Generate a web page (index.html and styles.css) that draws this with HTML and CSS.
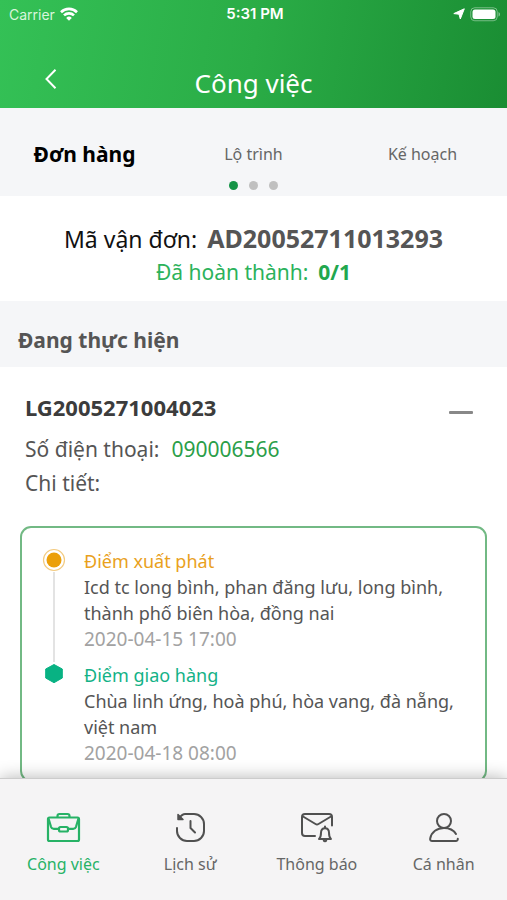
FILE: index.html
```html
<!DOCTYPE html>
<html lang="vi">
<head>
<meta charset="utf-8">
<meta name="viewport" content="width=device-width, initial-scale=1">
<title>Công việc</title>
<link rel="stylesheet" href="styles.css">
</head>
<body>
<header class="header">
  <div class="status">
    <div class="status-left">
      <span>Carrier</span>
      <svg width="18" height="14" viewBox="0 0 18 14" fill="none" stroke="currentColor" stroke-width="2.6" aria-hidden="true">
        <path d="M1 5.200a11.400 11.400 0 0 1 16 0M4 8.400a7.100 7.100 0 0 1 10 0"/>
        <path d="M9 13.800 6.200 10.900a4 4 0 0 1 5.600 0z" fill="currentColor" stroke="none"/>
      </svg>
    </div>
    <time class="clock">5:31 PM</time>
    <div class="status-right">
      <svg width="12" height="12" viewBox="0 0 12 12" fill="currentColor" stroke="currentColor" stroke-width="1" stroke-linejoin="round" aria-hidden="true"><path d="M11.300.8 7.300 11 6 6.200.8 5.600z"/></svg>
      <svg width="31" height="15" viewBox="0 0 31 15" aria-hidden="true">
        <rect x="0.75" y="0.75" width="26.5" height="13" rx="4" fill="none" stroke="#fff" stroke-opacity=".4"/>
        <rect x="2.5" y="2.5" width="23" height="9.5" rx="2.5" fill="#fff"/>
        <path d="M28.500 5v4.600c2-.8 2-3.800 0-4.600" fill="#fff" fill-opacity=".45"/>
      </svg>
    </div>
  </div>
  <div class="title-bar">
    <button class="back" type="button" aria-label="Quay lại">
      <svg width="14" height="22" viewBox="0 0 14 22" fill="none" stroke="currentColor" stroke-width="2"><path d="M11.500 1.800 2.500 11l9 9.200"/></svg>
    </button>
    <h1>Công việc</h1>
  </div>
</header>

<main>
  <nav class="tabs">
    <div class="tab-row">
      <a class="tab active" href="#don-hang">Đơn hàng</a>
      <a class="tab" href="#lo-trinh">Lộ trình</a>
      <a class="tab" href="#ke-hoach">Kế hoạch</a>
    </div>
    <div class="dots"><i class="dot on"></i><i class="dot"></i><i class="dot"></i></div>
  </nav>

  <section class="summary">
    <p class="code"><span>Mã vận đơn:</span><strong>AD20052711013293</strong></p>
    <p class="done"><span>Đã hoàn thành:</span><strong>0/1</strong></p>
  </section>

  <h2 class="group-title">Đang thực hiện</h2>

  <section class="order">
    <div class="order-head">
      <h3>LG2005271004023</h3>
      <button class="collapse" type="button" aria-label="Thu gọn"><i></i></button>
    </div>
    <p class="row"><span>Số điện thoại:</span><a href="tel:090006566">090006566</a></p>
    <p class="row">Chi tiết:</p>

    <ol class="route">
      <li class="stop start">
        <div class="rail">
          <svg width="24" height="24" viewBox="0 0 24 24" aria-hidden="true"><circle cx="12" cy="12" r="10.500" fill="none" stroke="#f3cb80" stroke-width="1.200"/><circle cx="12" cy="12" r="7.500" fill="#eb9f09"/></svg>
          <i class="line"></i>
        </div>
        <div>
          <h4>Điểm xuất phát</h4>
          <p>Icd tc long bình, phan đăng lưu, long bình, thành phố biên hòa, đồng nai</p>
          <time>2020-04-15 17:00</time>
        </div>
      </li>
      <li class="stop end">
        <div class="rail">
          <svg width="24" height="24" viewBox="0 0 24 24" aria-hidden="true"><path d="M12 2.500 20.300 7v9L12 20.700 3.700 16V7z" fill="#08b283" stroke="#08b283" stroke-width="1" stroke-linejoin="round"/></svg>
        </div>
        <div>
          <h4>Điểm giao hàng</h4>
          <p>Chùa linh ứng, hoà phú, hòa vang, đà nẵng, việt nam</p>
          <time>2020-04-18 08:00</time>
        </div>
      </li>
    </ol>
  </section>
</main>

<nav class="bottom-nav">
  <a class="active" href="#cong-viec">
    <svg width="36" height="32" viewBox="0 0 36 32" fill="none" stroke="currentColor" stroke-width="2.200" stroke-linejoin="round" aria-hidden="true">
      <rect x="3" y="5.500" width="31" height="23.500" rx="1.500"/>
      <path d="M3.500 6.500 6 14.800a3 3 0 0 0 2.800 2H14M33.500 6.500 31 14.800a3 3 0 0 1-2.800 2H23"/>
      <path d="M12.500 5.500V4a2 2 0 0 1 2-2h8a2 2 0 0 1 2 2v1.500"/>
      <rect x="14" y="15" width="9" height="4.500" rx="1.500"/>
    </svg>
    <span>Công việc</span>
  </a>
  <a href="#lich-su">
    <svg width="36" height="32" viewBox="0 0 36 32" fill="none" stroke="currentColor" stroke-width="2" stroke-linecap="round" stroke-linejoin="round" aria-hidden="true">
      <path d="M5 16v3a10 10 0 0 0 10 10h7a10 10 0 0 0 10-10v-7A10 10 0 0 0 22 2H13Q10.500 2 7 6"/>
      <path d="M6 2.500v5h5z" fill="currentColor" stroke-width="1.500"/>
      <path d="M18.500 9v7l4.500 4.500"/>
    </svg>
    <span>Lịch sử</span>
  </a>
  <a href="#thong-bao">
    <svg width="36" height="32" viewBox="0 0 36 32" fill="none" stroke="currentColor" stroke-width="2" stroke-linecap="round" stroke-linejoin="round" aria-hidden="true">
      <path d="M16 24H6a3 3 0 0 1-3-3V5a3 3 0 0 1 3-3h24a3 3 0 0 1 3 3v8.500"/>
      <path d="M4 4.500 16.500 12a3 3 0 0 0 3 0L32 4.500"/>
      <path d="M20 27c1.700-1.300 2-2.800 2-6.200 0-2.900 1.600-4.600 4-4.600s4 1.700 4 4.600c0 3.400.3 4.900 2 6.200z"/>
      <path d="M26 16v-1.500M24.800 28.500c.5 1 1.900 1 2.400 0"/>
    </svg>
    <span>Thông báo</span>
  </a>
  <a href="#ca-nhan">
    <svg width="36" height="32" viewBox="0 0 36 32" fill="none" stroke="currentColor" stroke-width="2" stroke-linecap="round" stroke-linejoin="round" aria-hidden="true">
      <circle cx="18" cy="9" r="7"/>
      <path d="M30 22C27.500 18 23 16 18 16 11 16 5.500 20 4.200 26.500c-.3 1.500.5 2.500 2 2.500h23.600c1.300 0 2.100-.8 2-2.200"/>
    </svg>
    <span>Cá nhân</span>
  </a>
</nav>
</body>
</html>
```
FILE: styles.css
```css
* { box-sizing: border-box; margin: 0; padding: 0; }

body {
  display: flex;
  flex-direction: column;
  height: 100vh;
  overflow: hidden;
  background: #fff;
  color: #555;
  font-family: "Noto Sans", "Open Sans", sans-serif;
  font-size: 18px;
}

a { color: inherit; text-decoration: none; }
button { border: 0; background: none; color: inherit; cursor: pointer; }
svg { display: block; flex: none; }

.header {
  flex: none;
  background: linear-gradient(100deg, #34c156, #2aac46 50%, #1a8d33);
  color: #fff;
}

.status {
  display: grid;
  grid-template-columns: 1fr auto 1fr;
  align-items: center;
  height: 28px;
  padding: 0 6px 0 9px;
  font-family: Inter, sans-serif;
  font-size: 14px;
}
.status-left, .status-right { display: flex; align-items: center; gap: 5px; }
.status-left { color: #d9f5dc; }
.status-left svg { color: #fff; }
.status-right { justify-content: flex-end; }
.clock { font-size: 15px; font-weight: 600; line-height: 26px; }

.title-bar {
  display: grid;
  grid-template-columns: 1fr auto 1fr;
  align-items: center;
  padding: 30px 40px 0;
}
.title-bar h1 { font-size: 26px; font-weight: 400; line-height: 50px; }
.back { justify-self: start; padding: 0 4px 8px; }

main { flex: 1; min-height: 0; overflow: hidden; }

.tabs { padding: 28px 0 6px; background: #f5f6f8; }
.tab-row { display: grid; grid-template-columns: repeat(3, 1fr); align-items: center; text-align: center; }
.tab { font-size: 16px; line-height: 36px; color: #666; }
.tab.active { font-size: 21px; font-weight: 700; color: #000; }
.dots { display: flex; justify-content: center; gap: 11px; padding-top: 9px; }
.dot { width: 9px; height: 9px; border-radius: 50%; background: #c0c0c0; }
.dot.on { background: #159447; }

.summary { padding: 25px 0 11px; text-align: center; }
.code, .done { display: flex; justify-content: center; align-items: baseline; gap: 10px; line-height: 34px; }
.code { font-size: 23px; color: #111; }
.code strong { font-size: 25px; color: #555; }
.done { font-size: 21px; line-height: 32px; padding-bottom: 2px; color: #2bb25b; }
.done strong { color: #22a74e; }

.group-title { padding: 22px 18px 10px; background: #f5f6f8; font-size: 21px; line-height: 34px; }

.order { padding: 23px 20px; }
.order-head { display: flex; align-items: center; justify-content: space-between; padding: 0 14px 0 5px; }
.order h3 { font-size: 22px; line-height: 34px; color: #3c3c3c; }
.collapse { padding: 13px 0 2px; }
.collapse i { display: block; width: 24px; height: 3px; border-radius: 1px; background: #888; }
.row { display: flex; gap: 12px; padding-left: 5px; font-size: 21px; line-height: 34px; }
.order-head + .row { padding-top: 8px; }
.row a { color: #2b9e49; }

.route {
  margin-top: 26px;
  padding: 20px 20px 14px;
  border: 2px solid #72b984;
  border-radius: 11px;
  list-style: none;
}
.stop { display: grid; grid-template-columns: 24px 1fr; gap: 18px; line-height: 26px; }
.start { padding-bottom: 10px; }
.rail { display: flex; flex-direction: column; align-items: center; }
.rail .line { flex: 1; width: 2px; margin-bottom: -10px; background: #e3e3e3; }
.stop h4 { font-size: inherit; font-weight: 400; }
.start h4 { color: #e9a11d; }
.end h4 { color: #13b287; }
.stop time { display: block; font-size: 19px; color: #a2a2a2; }

.bottom-nav {
  flex: none;
  display: grid;
  grid-template-columns: repeat(4, 1fr);
  z-index: 1;
  padding: 33px 0 24px;
  border-top: 1px solid #ccc;
  background: #f5f4f5;
  box-shadow: 0 0 16px rgba(0, 0, 0, .3);
}
.bottom-nav a { display: flex; flex-direction: column; align-items: center; gap: 8px; font-size: 16px; line-height: 24px; color: #666; }
.bottom-nav svg { color: #505050; }
.bottom-nav .active, .bottom-nav .active svg { color: #27b266; }
```
